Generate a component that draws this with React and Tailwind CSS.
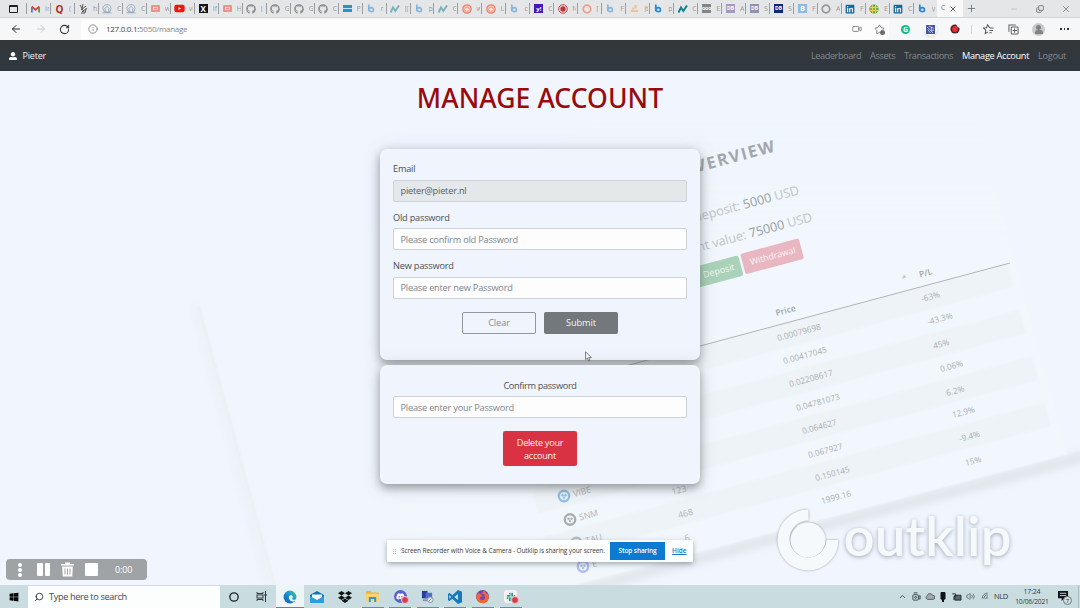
import React from "react";
import {
  FaGithub, FaYoutube, FaLinkedin, FaDropbox, FaDiscord,
  FaFirefoxBrowser, FaSlack, FaWindows, FaUserAlt,
} from "react-icons/fa";
import { ArrowLeft, ArrowRight, RotateCw, Info, Plus, X, Minus, Copy, Video, Star, Search, Circle, ChevronUp, Volume2, Wifi } from "lucide-react";

const Bing = ({ faded }) => (
  <svg viewBox="0 0 10 10" className={faded ? "size-[9px] opacity-50" : "size-[9px]"}>
    <path d="M2 0.5 V8 M2.500 6.500A2.300 2.300 0 1 1 5 8.600A2.500 2.500 0 0 1 2.500 6.500" fill="none" stroke="#2a86cf" strokeWidth="1.900" />
  </svg>
);
const Trend = ({ faded }) => (
  <svg viewBox="0 0 10 10" className={faded ? "size-[10px] opacity-50" : "size-[10px]"}>
    <path d="M.5 8.5 L3 3.5 L5.3 7 L9 1.5" stroke="#14808f" strokeWidth="2" fill="none" />
  </svg>
);
const Tile = ({ cls, children }) => (
  <span className={`flex size-[9px] items-center justify-center text-[5px] font-bold leading-none text-white ${cls}`}>{children}</span>
);
const Gmail = () => (
  <svg viewBox="0 0 10 8" className="h-[8px] w-[9px]" fill="none" strokeWidth="2">
    <path d="M1 8V2" stroke="#4a7fd6" />
    <path d="M9 8V2" stroke="#3ba558" />
    <path d="M.7 1.200L5 4.800L9.300 1.200" stroke="#d8463c" />
  </svg>
);
const Snoo = () => (
  <svg viewBox="0 0 10 10" className="size-[10px]" fill="none" stroke="#ec8068">
    <circle cx="5" cy="5" r="4.2" fill="#f7c8bb" strokeWidth="1.2" />
    <path d="M2.600 5.300A2.400 2 0 0 0 7.400 5.300A2.400 2 0 0 0 2.600 5.300" fill="#fff1ec" strokeWidth=".7" />
    <path d="M3.800 5H4.400 M5.700 5H6.300" strokeWidth="1.1" />
  </svg>
);
const House = () => (
  <svg viewBox="0 0 10 10" className="size-[10px]" fill="none" stroke="#93a9bf">
    <circle cx="5" cy="4.6" r="4" strokeWidth=".9" />
    <path d="M2.4 5 L5 2.4 L7.6 5 M3.2 5 V8 H6.8 V5 M.5 8.8 H9.5" strokeWidth=".9" />
  </svg>
);
const Ring = ({ color, dot }) => (
  <svg viewBox="0 0 10 10" className="size-[10px]">
    <circle cx="5" cy="5" r={dot ? 4.3 : 3.8} fill="none" stroke={color} strokeWidth={dot ? 0.9 : 1.7} />
    {dot && <circle cx="5" cy="5" r="2.7" fill={color} />}
  </svg>
);
const Clip = () => (
  <span className="flex h-[7px] w-[9px] items-center justify-center rounded-[1px] bg-[#f08f8b]"><span className="h-[3px] w-[5px] border border-[#f9d2d0]" /></span>
);
const Git = () => <FaGithub className="size-[10px] text-[#909396]" />;

const tabs = [
  [<Gmail />, "Ir"],
  [<span className="text-[10px] font-bold leading-none text-[#a82f20]">Q</span>, "("],
  [<svg viewBox="0 0 10 10" className="size-[10px]" fill="none" stroke="#555"><path d="M2 1 L6 8 M5 0 L4 5 M8 2 L3 6 M9 4 L4 8 M3 9 H7 L8 5" /></svg>, "h"],
  [<House />, "C"],
  [<House />, "C"],
  [<Clip />, "w"],
  [<FaYoutube className="size-[11px] text-[#f5150f]" />, "vi"],
  [<Tile cls="bg-[#10161c] text-[8px]">X</Tile>, "If"],
  [<Clip />, "H"],
  [<Git />, "J"], [<Git />, "G"], [<Git />, "G"], [<Git />, "C"],
  [<span className="flex h-[7px] w-[9px] flex-col justify-center bg-[#2992cc]"><span className="h-px bg-[#c1e3f5]" /></span>, "P"],
  [<Bing faded />, "r"],
  [<Trend faded />, "(("],
  [<Bing faded />, "p"],
  [<Trend faded />, "G"],
  [<Snoo />, "w"],
  [<Snoo />, "L"],
  [<Bing faded />, "c"],
  [<Tile cls="bg-[#4b15b8] text-[6px]">y!</Tile>, "C"],
  [<Ring color="#c83038" dot />, "N"],
  [<Ring color="#efa08a" />, "["],
  [<Bing faded />, "F"],
  [<svg viewBox="0 0 10 10" className="size-[9px]"><path d="M5 1h2.3v4H5z M2.5 4h2v2h-2z M1 7h8v2H1z" fill="#ecc08a" /></svg>, "jt"],
  [<Bing />, "p"],
  [<Trend />, "C"],
  [<Tile cls="bg-[#858585] text-[3px]">ooo</Tile>, "E"],
  [<Tile cls="bg-[#9f9bc3]">DB</Tile>, "A"],
  [<Tile cls="bg-[#8e93b5]">DB</Tile>, "S"],
  [<Tile cls="bg-[#0b2a7d]">DB</Tile>, "S"],
  [<Tile cls="bg-[#8dbbe6] text-[7px]">B</Tile>, "F"],
  [<Ring color="#96999c" />, "A"],
  [<FaLinkedin className="size-[10px] text-[#156a9e]" />, "F"],
  [<svg viewBox="0 0 10 10" className="size-[10px]"><circle cx="5" cy="5" r="4.6" fill="#4b9d52" /><path d="M1 3.5H9 M1 6.5H9 M3.5 1V9 M6.5 1V9" stroke="#e6cf4e" strokeWidth="1.3" /></svg>, "E"],
  [<FaLinkedin className="size-[10px] text-[#156a9e]" />, "C"],
  [<Bing />, "y"],
];

function TabStrip() {
  return (
    <div className="flex h-[18px] items-center border-b border-[#d3d4d6] bg-[#e5e6e8]">
      <div className="flex w-[26px] shrink-0 justify-center">
        <span className="block h-[8px] w-[9px] rounded-[1px] border border-t-2 border-[#202020]" />
      </div>
      <div className="flex w-[911px] shrink-0">
        {tabs.map(([icon, letter], i) => (
          <div key={i} className="flex h-[11px] min-w-0 flex-1 items-center overflow-hidden border-l border-[#9b9d9f] pl-[3px]">
            <span className="flex w-[11px] shrink-0 justify-center">{icon}</span>
            <span className="ml-[4px] w-[4px] overflow-hidden whitespace-nowrap text-[7px] leading-none text-[#96999c]">{letter}</span>
          </div>
        ))}
      </div>
      <div className="flex h-full w-[26px] items-center gap-[4px] bg-[#f8f8f9] pl-[4px] text-[7px] text-[#777]">
        <span>C</span>
        <X className="size-[8px] text-[#444]" strokeWidth={2.5} />
      </div>
      <div className="flex h-full grow items-center pl-[3px] text-[#6b6d70]">
        <Plus className="size-[11px]" strokeWidth={1.8} />
        <Minus className="ml-[33px] size-[8px] text-[#b5b7b9]" strokeWidth={2} />
        <Copy className="ml-[18px] size-[8px]" strokeWidth={2.5} style={{ transform: "scaleY(-1)" }} />
        <X className="ml-[17px] size-[10px]" strokeWidth={1.8} />
      </div>
    </div>
  );
}

function Toolbar() {
  return (
    <div className="flex h-[22px] items-center bg-[#f6f7f8]">
      <ArrowLeft className="ml-[10px] size-[12px] text-[#202225]" strokeWidth={2} />
      <ArrowRight className="ml-[13px] size-[12px] text-[#c9cbcd]" strokeWidth={2} />
      <RotateCw className="ml-[12px] size-[11px] text-[#333]" strokeWidth={2.2} />
      <div className="ml-[11px] flex h-[19px] w-[808px] items-center rounded-[2px] bg-[#fdfdfd] pl-[7px]">
        <Info className="size-[10px] text-[#707070]" strokeWidth={1.8} />
        <span className="ml-[8px] text-[8px] leading-none tracking-[-0.28px] text-[#3f4143]">
          127.0.0.1:<span className="text-[#85878a]">5050/manage</span>
        </span>
        <Video className="ml-auto size-[10px] text-[#77797b]" strokeWidth={2} />
        <span className="relative ml-[12px] mr-[4px]">
          <Star className="size-[11px] text-[#6b6d70]" strokeWidth={1.8} />
          <span className="absolute bottom-0 right-0 size-[5px] rounded-full bg-[#6b6d70]" />
        </span>
      </div>
      <span className="ml-[12px] flex size-[9px] items-center justify-center rounded-full bg-[#1fb58c] text-[7px] font-bold leading-none text-white">G</span>
      <span className="ml-[14px] flex size-[13px] items-center justify-center rounded-full bg-white shadow">
        <svg viewBox="0 0 10 10" className="size-[9px]"><path d="M0 0H10V10H0z" fill="#4551a8" /><path d="M1 2L8 9 M3 1L9 4 M2 5L5 9 M6 2V6H9" stroke="#d6d9f2" strokeWidth=".9" fill="none" /></svg>
      </span>
      <svg viewBox="0 0 10 10" className="ml-[13px] size-[10px]"><circle cx="5" cy="5" r="4.6" fill="#50262a" /><circle cx="5" cy="5" r="2.900" fill="#ea2b2f" /><path d="M6 0L10 0V4L7.500 3Z" fill="#f6f7f8" /></svg>
      <span className="ml-[11px] h-[9px] w-px bg-[#d3d5d7]" />
      <svg viewBox="0 0 12 12" className="ml-[11px] size-[11px]" fill="none" stroke="#55575a" strokeWidth="1.1"><path d="M7.4 4.2L5 .9 3.8 4 .6 4.4 3 6.8 2.4 10.3 5.4 8.6 M7.6 4.4H11.5 M7 7H11 M7 9.5H9.5" /></svg>
      <svg viewBox="0 0 12 12" className="ml-[14px] size-[11px]" fill="none" stroke="#606265" strokeWidth="1.1"><rect x="3.5" y="3.2" width="7.5" height="7.8" rx="1" /><path d="M7.2 4.8V9.5 M5 7.2H9.6 M1 8.5V1H8.5" /></svg>
      <span className="ml-[13px] flex size-[13px] flex-col items-center justify-center overflow-hidden rounded-full bg-[#c9cacb]">
        <span className="size-[5px] rounded-full bg-[#808284]" />
        <span className="h-[4px] w-[8px] rounded-t-[3px] bg-[#808284]" />
      </span>
      <span className="ml-[15px] flex gap-[2px]">
        <i className="size-[1.5px] bg-[#333]" /><i className="size-[1.5px] bg-[#333]" /><i className="size-[1.5px] bg-[#333]" />
      </span>
    </div>
  );
}

function NavBar() {
  return (
    <nav className="flex h-[31px] items-center bg-linear-to-b from-[#343739] to-[#2f3840] text-[9.2px] leading-none text-[#85898d]">
      <FaUserAlt className="ml-[9px] size-[8px] text-white" />
      <span className="ml-[5.500px] text-[9px] tracking-[-0.2px] text-[#f1f2f3]">Pieter</span>
      <div className="ml-auto flex whitespace-nowrap pr-[13px]">
        <span className="w-[59px] tracking-[-0.45px]">Leaderboard</span>
        <span className="w-[34px] tracking-[-0.35px]">Assets</span>
        <span className="w-[58px] tracking-[-0.48px]">Transactions</span>
        <span className="w-[76px] tracking-[-0.3px] text-white">Manage Account</span>
        <span className="w-[29px] tracking-[-0.3px]">Logout</span>
      </div>
    </nav>
  );
}

const prices = [
  ["0.00079698", 778, 341, "-63%", 922, 302],
  ["0.00417045", 784, 364, "-43.3%", 928, 325],
  ["0.02208617", 790, 387, "45%", 934, 349],
  ["0.04781073", 797, 411, "0.06%", 941, 372],
  ["0.064627", 803, 434, "6.2%", 947, 396],
  ["0.067927", 809, 458, "12.9%", 953, 418],
  ["0.150145", 816, 481, "-9.4%", 960, 442],
  ["1999.16", 822, 504, "15%", 966, 466],
];
const coins = [
  ["VIBE", "123", 564, 496, "#93bfe6"],
  ["SNM", "468", 570, 519.5, "#a9adb0"],
  ["TAU", "6", 576.5, 543, "#b9bdc0"],
  ["E", "", 583, 566.5, "#aebcf0"],
];

function Slanted({ x, y, children, ...rest }) {
  return <text x={x} y={y} transform={`rotate(-15 ${x} ${y})`} {...rest}>{children}</text>;
}

/* Tilted overview sheet used as the page's backdrop. */
function Backdrop() {
  return (
    <svg className="absolute inset-0 h-full w-full" viewBox="0 71 1080 514">
      <defs>
        <filter id="soft" x="-20%" y="-20%" width="140%" height="140%"><feGaussianBlur stdDeviation="4" /></filter>
        <filter id="edge" x="-20%" y="-20%" width="140%" height="140%"><feGaussianBlur stdDeviation="1.200" /></filter>
        <linearGradient id="sheet" x1="0" y1="90" x2="0" y2="240" gradientUnits="userSpaceOnUse">
          <stop offset="0" stopColor="#f1f7fc" stopOpacity="0" />
          <stop offset="1" stopColor="#f1f7fc" />
        </linearGradient>
        <linearGradient id="fade" x1="200" y1="0" x2="520" y2="0" gradientUnits="userSpaceOnUse">
          <stop offset="0" stopColor="#f0f5fe" />
          <stop offset="1" stopColor="#f0f5fe" stopOpacity="0" />
        </linearGradient>
      </defs>
      <path d="M1100 449L560 591.500V599L1100 457Z" fill="#dbe0e5" filter="url(#soft)" />
      <path d="M196 305L271 590" stroke="#ebf0f5" strokeWidth="6" fill="none" filter="url(#soft)" />
      <path d="M964 71L1068 455L560 591H276L200 307L700 71Z" fill="url(#sheet)" filter="url(#edge)" />
      <path d="M964 71L1068 455L560 591H277L201 307L700 71Z" fill="url(#fade)" />
      <path d="M199 307L276 590" stroke="#e7edef" strokeWidth="1.500" fill="none" filter="url(#edge)" />
      <path d="M1080 453L560 590.500" stroke="#e2e7ea" strokeWidth="1.500" filter="url(#edge)" />
      <g transform="translate(700 346) rotate(-15)" fill="#eef3f7" filter="url(#edge)">
        <rect x="-200" y="0" width="518" height="24" />
        <rect x="-200" y="48" width="518" height="24" />
        <rect x="-200" y="96" width="518" height="24" />
        <rect x="-200" y="144" width="518" height="24" />
      </g>
      <path d="M560 383.500L1010 263" stroke="#b0b5b9" strokeWidth="1" />
      <g fontFamily="Open Sans, Noto Sans, sans-serif" fill="#afb3b7">
        <Slanted x={777} y={151} textAnchor="end" fontSize="16.500" fontWeight="700" letterSpacing="1.600" fill="#a3a7ab">OVERVIEW</Slanted>
        <Slanted x={800} y={194} textAnchor="end" fontSize="12.700" fill="#c0c4c8">Total deposit: <tspan fill="#989da1">5000</tspan> USD</Slanted>
        <Slanted x={813} y={221} textAnchor="end" fontSize="12.700" fill="#c0c4c8">Current value: <tspan fill="#989da1">75000</tspan> USD</Slanted>
        <rect width="55" height="21" rx="2" fill="#a9d2b8" transform="translate(685 269.500) rotate(-15)" />
        <rect width="60.500" height="21" rx="2" fill="#e8b7c1" transform="translate(740.200 254) rotate(-15)" />
        <Slanted x={704} y={278} fontSize="9" fill="#f1f7f4">Deposit</Slanted>
        <Slanted x={751} y={265} fontSize="8.800" fill="#fdf3f5">Withdrawal</Slanted>
        <Slanted x={776.5} y={316} fontSize="8.500" fontWeight="600" fill="#9fa3a7">Price</Slanted>
        <Slanted x={920} y={277.5} fontSize="8.500" fontWeight="600" fill="#9fa3a7">P/L</Slanted>
        <path d="M904 274.500L906.500 277.500L901.800 278.500Z" fill="#c3c8cc" />
        {prices.map(([p, x, y, pl, px, py]) => (
          <g key={p} fontSize="8.300" fill="#adb1b5">
            <Slanted x={x} y={y}>{p}</Slanted>
            <Slanted x={px} y={py}>{pl}</Slanted>
          </g>
        ))}
        {coins.map(([name, n, x, y, c], i) => (
          <g key={name} fontSize="8.800">
            <circle cx={x} cy={y} r="5.200" fill="none" stroke={c} strokeWidth="2.400" />
            <circle cx={x - 1.5} cy={y - 0.8} r="1.200" fill={c} />
            <circle cx={x + 1.5} cy={y - 0.8} r="1.200" fill={c} />
            <circle cx={x} cy={y + 1.6} r="1.200" fill={c} />
            <Slanted x={x + 10} y={y + 1}>{name}</Slanted>
            <Slanted x={672.5 + i * 6.5} y={495 + i * 23.3}>{n}</Slanted>
          </g>
        ))}
      </g>
    </svg>
  );
}

function Watermark() {
  return (
    <svg className="absolute left-[770px] top-[430px] h-[84px] w-[250px]" viewBox="770 501 250 84">
      <g fill="#f5f9fc">
        <g style={{ filter: "drop-shadow(0 0 1px rgb(120 132 140 / .75))" }}>
          <path d="M808.500 509.500A30.500 30.500 0 1 0 838.500 540H826.500A18.500 18.500 0 1 1 808.500 520.500Z" />
          <circle cx="808" cy="540" r="17.500" />
        </g>
        <text x="843.500" y="556" fontFamily="Lato, sans-serif" fontSize="54" fontWeight="600" textLength="168" lengthAdjust="spacingAndGlyphs" style={{ filter: "drop-shadow(0 1px 2px rgb(110 125 135 / .65))" }}>outklip</text>
      </g>
    </svg>
  );
}

const label = "block text-[9.2px] leading-[12px] tracking-[-0.2px] text-[#4a4f55]";
const input = "mt-[4.500px] block h-[22px] w-full rounded-[2px] border border-[#ced3d8] px-[6.500px] text-[9.2px] tracking-[-0.2px] text-[#565b60] placeholder:text-[#81868b] outline-none";
const field = `bg-[#fdfdfe] ${input}`;
const card = "w-[320px] rounded-[7px] bg-[#f0f5fd] px-[13px] shadow-[0_4px_9px_rgba(70,75,80,0.45),0_2px_18px_rgba(90,95,100,0.22)]";

function Page() {
  return (
    <main className="relative h-[514px] overflow-hidden bg-[#f0f5fe]">
      <Backdrop />
      <div className="relative flex flex-col items-center">
        <h1 className="mt-[10px] h-[34px] whitespace-nowrap font-['Noto_Sans'] text-[26.5px] font-medium leading-[34px] tracking-[0.08px] text-[#970b0e]">MANAGE ACCOUNT</h1>
        <section className={`mt-[34px] h-[211px] pt-[14px] ${card}`}>
          <label className={label}>Email</label>
          <input readOnly value="pieter@pieter.nl" className={`${input} bg-[#e4e8eb]`} />
          <label className={`${label} mt-[10px]`}>Old password</label>
          <input placeholder="Please confirm old Password" className={field} />
          <label className={`${label} mt-[10px]`}>New password</label>
          <input placeholder="Please enter new Password" className={field} />
          <div className="mt-[13.500px] flex justify-center gap-[8px] text-[9.2px] tracking-[-0.1px]">
            <button className="h-[22px] w-[74px] rounded-[2px] border border-[#92979c] text-[#868b90]">Clear</button>
            <button className="h-[22px] w-[74px] rounded-[2px] bg-[#73787d] text-[#f4f5f6]">Submit</button>
          </div>
        </section>
        <section className={`mt-[5px] h-[119px] pt-[14.5px] ${card}`}>
          <label className={`${label} text-center tracking-[-0.33px]`}>Confirm password</label>
          <input placeholder="Please enter your Password" className={field} />
          <button className="mx-auto mt-[13px] block h-[35px] w-[74px] rounded-[2px] bg-[#d93343] px-[8px] text-[9.2px] leading-[13px] tracking-[-0.3px] text-[#fdeef0]">Delete your account</button>
        </section>
      </div>
      <svg className="absolute left-[585px] top-[280px] h-[11px] w-[8px]" viewBox="0 0 8 11"><path d="M.6 .8V8.600L2.400 7 3.700 10 5 9.400 3.700 6.600H6.400Z" fill="#fff" stroke="#55595d" strokeWidth=".8" /></svg>
      <Watermark />
      <div className="absolute left-[387px] top-[469px] flex h-[22px] w-[306px] items-center bg-[#fcfdfd] text-[6.5px] leading-none text-[#3b3e42] shadow-[0_2px_5px_rgba(80,90,100,0.5)]">
        <span className="ml-[6px] h-[5px] w-[3px] border-x border-dotted border-[#c0c4c8]" />
        <span className="ml-[5px] w-[209px] shrink-0 whitespace-nowrap tracking-[-0.11px]">Screen Recorder with Voice &amp; Camera - Outklip is sharing your screen.</span>
        <button className="flex h-[18px] w-[55px] shrink-0 items-center justify-center bg-[#0b7ad0] font-semibold tracking-[-0.1px] text-white">Stop sharing</button>
        <a className="ml-[7px] font-semibold text-[#1b78c0] underline">Hide</a>
      </div>
      <div className="absolute left-[6px] top-[488px] flex h-[21px] w-[141px] items-center rounded-[4px] bg-[#9fa3a5] text-white">
        <span className="ml-[12px] flex flex-col gap-[1px]">
          <i className="size-[4px] rounded-full bg-white" /><i className="size-[4px] rounded-full bg-white" /><i className="size-[4px] rounded-full bg-white" />
        </span>
        <span className="ml-[15px] flex gap-[2px]"><i className="h-[13px] w-[5.500px] rounded-[1px] bg-white" /><i className="h-[13px] w-[5.500px] rounded-[1px] bg-white" /></span>
        <svg viewBox="0 0 13 15" className="ml-[11px] h-[15px] w-[13px]"><path d="M4 2V.5H9V2H13V3.500H0V2Z M1.200 4.500H11.800L11.300 14.500H1.700Z" fill="#fff" /><path d="M4 6.500V12.500 M6.500 6.500V12.500 M9 6.500V12.500" stroke="#9fa3a5" /></svg>
        <i className="ml-[11px] size-[13px] rounded-[1px] bg-white" />
        <span className="ml-[17px] text-[9px] leading-none tracking-[-0.1px]">0:00</span>
      </div>
    </main>
  );
}

const Badge = () => <span className="absolute -bottom-[1px] -right-[2px] size-[8px] rounded-full border border-[#f3c8cc] bg-[#d63d4c]" />;

const apps = [
  <svg viewBox="0 0 24 24" className="size-[14px]">
    <defs><linearGradient id="eg" x1="0" y1="1" x2="1" y2="0"><stop offset="0" stopColor="#0b55a8" /><stop offset=".55" stopColor="#1b95d6" /><stop offset="1" stopColor="#4fcf73" /></linearGradient></defs>
    <circle cx="12" cy="12" r="11" fill="url(#eg)" /><path d="M10 12C10 8 17 8 17 12C17 14 15 15 16 16C18 18 22 16 23 14C21 19 17 21 14 19C11 18 10 15 10 12Z" fill="#e4f4f6" />
  </svg>,
  <svg viewBox="0 0 14 12" className="h-[12px] w-[14px]"><path d="M0 4L7 0L14 4V12H0Z" fill="#1272b8" /><path d="M2 3.500H12V7L7 9.500L2 7Z" fill="#f2fafd" /><path d="M0 5L7 9L14 5V12H0Z" fill="#2b9de0" /></svg>,
  <FaDropbox className="size-[14px] text-[#101416]" />,
  <svg viewBox="0 0 14 12" className="h-[11px] w-[13px]"><path d="M0 0H5L6 1.500H14V12H0Z" fill="#e9b640" /><path d="M0 3H14V12H0Z" fill="#fad671" /><path d="M3 12V6.500H11V12H8.800V8.800H5.200V12Z" fill="#3692d4" /></svg>,
  <><span className="flex size-[13px] items-center justify-center rounded-full bg-[#5a61cf]"><FaDiscord className="size-[9px] text-white" /></span><Badge /></>,
  <svg viewBox="0 0 14 14" className="size-[13px]"><path d="M1 1H7V9H1Z" fill="#2b3d94" /><path d="M5 3H12V9H5Z" fill="#4c70c9" /><path d="M2 10H7V12H2Z" fill="#8193ae" /><circle cx="10" cy="10.500" r="3" fill="#e4e8ea" stroke="#8a9194" /><path d="M8.500 12L11.500 9" stroke="#8a9194" /></svg>,
  <svg viewBox="0 0 14 14" className="size-[14px]"><path d="M10 0L14 1.800V12.200L10 14L4.400 8.800L1.600 11L0 10.200V3.800L1.600 3L4.400 5.200Z M10 4L6.300 7L10 10Z M1.300 5V9L3.200 7Z" fill="#1678bd" fillRule="evenodd" /></svg>,
  <span className="flex size-[13px] items-center justify-center rounded-full bg-[#7443b8]"><FaFirefoxBrowser className="size-[14px] text-[#f4652f]" /></span>,
  <><span className="flex size-[13px] items-center justify-center rounded-[3px] bg-[#f6f2f4]"><FaSlack className="size-[10px] text-[#2e9c87]" /></span><Badge /></>,
];

function Taskbar() {
  return (
    <footer className="flex h-[23px] items-center bg-[#c9dde1] text-[#1e2427]">
      <span className="flex w-[28px] justify-center"><FaWindows className="size-[10px] text-black" /></span>
      <div className="flex h-full w-[192px] items-center border-t border-[#d4dadd] bg-[#fcfdfd] pl-[6px]">
        <Search className="size-[10px] -scale-x-100" strokeWidth={2} />
        <span className="ml-[5px] text-[9.2px] leading-none tracking-[-0.62px] text-[#45494c]">
          <span className="tracking-[-0.36px]">Type here to search</span>
        </span>
      </div>
      <span className="flex w-[28px] justify-center"><Circle className="size-[10px]" strokeWidth={3.2} /></span>
      <span className="flex w-[26px] justify-center">
        <svg viewBox="0 0 11 11" className="size-[11px]" fill="none" stroke="#30383b" strokeWidth="1"><path d="M1 1V2.500H7V1 M1 10V8.500H7V10 M9.500 0V11" /><rect x="1" y="4" width="6" height="3" /><path d="M8.500 4H10.500" strokeWidth="2" /></svg>
      </span>
      <div className="ml-[2px] flex h-full">
        {apps.map((icon, i) => (
          <span key={i} className={`flex h-full w-[27.600px] items-center justify-center ${i === 0 ? "bg-[#edf5f6]" : ""}`}>
            <span className={`flex h-full items-center justify-center border-b-[1.500px] pt-px ${i === 0 ? "w-full border-[#1f9fb5]" : i > 2 ? "w-[22px] border-[#2ba5b9]" : "w-[22px] border-transparent"}`}>
              <span className="relative flex">{icon}</span>
            </span>
          </span>
        ))}
      </div>
      <div className="ml-auto flex h-full items-center">
        <ChevronUp className="size-[9px]" strokeWidth={2} />
        <svg viewBox="0 0 10 10" className="ml-[5px] size-[9px]" fill="none" stroke="#353c40"><rect x="1" y="3" width="6" height="6" rx="1" /><path d="M7 5L9 4V8L7 7 M2 1H6" /><circle cx="4" cy="6" r="1" /></svg>
        <svg viewBox="0 0 12 10" className="ml-[4px] h-[9px] w-[10px]"><path d="M3 8.500A2.500 2.500 0 0 1 2.500 4A3.500 3.500 0 0 1 9 3.500A2.500 2.500 0 0 1 9.500 8.500Z" fill="#a1a9ac" stroke="#4b5256" /></svg>
        <svg viewBox="0 0 6 10" className="ml-[5px] h-[10px] w-[6px]"><path d="M.5 1A1 1 0 0 1 1.500 0H4.500A1 1 0 0 1 5.500 1V7L4 8V10H2V8L.5 7Z" fill="#0e1214" /></svg>
        <svg viewBox="0 0 11 9" className="ml-[6px] h-[8px] w-[10px]"><path d="M3 2.500H10V8H3Z" fill="#5e676b" stroke="#202629" /><path d="M0 1H4V4H2V8" fill="none" stroke="#202629" /></svg>
        <Volume2 className="ml-[4px] size-[9px] text-[#50585c]" strokeWidth={2} />
        <Wifi className="ml-[6px] size-[9px] -rotate-45 text-[#50585c]" strokeWidth={2} />
        <span className="ml-[4px] text-[7.5px] leading-none tracking-[-0.3px] text-[#343a3d]">NLD</span>
        <div className="ml-[7px] flex w-[34px] flex-col items-center text-[7px] leading-[10px] tracking-[-0.2px] text-[#343a3d]">
          <span>17:24</span>
          <span className="text-[6.700px]">10/06/2021</span>
        </div>
        <span className="relative ml-[9px] mr-[9px] flex">
          <svg viewBox="0 0 12 12" className="size-[11px]"><path d="M0 0H11V8H7L4 11V8H0Z" fill="#101416" /><path d="M2 2.500H9 M2 5H9" stroke="#c9dde1" /></svg>
          <span className="absolute -bottom-[3px] -right-[3px] flex size-[9px] items-center justify-center rounded-full border border-[#6f777a] bg-[#d3e0e2] text-[6px] leading-none">7</span>
        </span>
        <span className="mr-[1px] h-full w-px bg-[#aabdc1]" />
      </div>
    </footer>
  );
}

export default function App() {
  return (
    <div className="h-[608px] w-[1080px] overflow-hidden font-['Open_Sans','Noto_Sans',sans-serif]">
      <TabStrip />
      <Toolbar />
      <NavBar />
      <Page />
      <Taskbar />
    </div>
  );
}
